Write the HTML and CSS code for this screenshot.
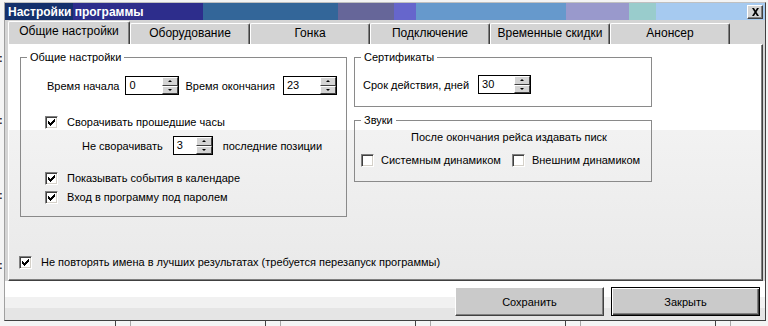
FILE: index.html
```html
<!DOCTYPE html>
<html lang="ru">
<head>
    <meta charset="UTF-8">
    <meta name="viewport" content="width=device-width, initial-scale=1.0">
    <title>Настройки программы</title>
    <link rel="stylesheet" href="styles.css">
</head>
<body>
    <div class="desk">
        <div class="left-strip">
            <span class="dots d1">:</span>
            <span class="dots d2">:</span>
            <span class="dots d3">:</span>
            <span class="dots d4">:</span>
        </div>
        <div class="window">
            <div class="titlebar">
                <span class="title">Настройки программы</span>
                <button class="close-btn">
                    <svg width="9" height="8" viewBox="0 0 9 8"><path d="M1 0h2l1.5 2.5L6 0h2L5.5 4L8 8H6L4.5 5.5L3 8H1l2.5-4z"/></svg>
                </button>
            </div>

            <div class="tabs">
                <div class="tab active">Общие настройки</div>
                <div class="tab">Оборудование</div>
                <div class="tab">Гонка</div>
                <div class="tab">Подключение</div>
                <div class="tab">Временные скидки</div>
                <div class="tab">Анонсер</div>
            </div>

            <div class="page">
                <div class="groups">
                    <fieldset class="group general">
                        <legend>Общие настройки</legend>
                        <div class="row times">
                            <span>Время начала</span>
                            <div class="spin s-start"><span class="val">0</span><span class="spin-btns"><i class="up"></i><i class="down"></i></span></div>
                            <span>Время окончания</span>
                            <div class="spin s-end"><span class="val">23</span><span class="spin-btns"><i class="up"></i><i class="down"></i></span></div>
                        </div>
                        <label class="check collapse">
                            <span class="box"><svg width="7" height="7" viewBox="0 0 7 7"><path d="M6 0h1v1H6zM5 1h2v1H5zM0 2h1v1H0zM4 2h3v1H4zM0 3h2v1H0zM3 3h3v1H3zM0 4h5v1H0zM1 5h3v1H1zM2 6h1v1H2z"/></svg></span>
                            Сворачивать прошедшие часы
                        </label>
                        <div class="row keep">
                            <span>Не сворачивать</span>
                            <div class="spin s-keep"><span class="val">3</span><span class="spin-btns"><i class="up"></i><i class="down"></i></span></div>
                            <span>последние позиции</span>
                        </div>
                        <label class="check events">
                            <span class="box"><svg width="7" height="7" viewBox="0 0 7 7"><path d="M6 0h1v1H6zM5 1h2v1H5zM0 2h1v1H0zM4 2h3v1H4zM0 3h2v1H0zM3 3h3v1H3zM0 4h5v1H0zM1 5h3v1H1zM2 6h1v1H2z"/></svg></span>
                            Показывать события в календаре
                        </label>
                        <label class="check password">
                            <span class="box"><svg width="7" height="7" viewBox="0 0 7 7"><path d="M6 0h1v1H6zM5 1h2v1H5zM0 2h1v1H0zM4 2h3v1H4zM0 3h2v1H0zM3 3h3v1H3zM0 4h5v1H0zM1 5h3v1H1zM2 6h1v1H2z"/></svg></span>
                            Вход в программу под паролем
                        </label>
                    </fieldset>

                    <div class="side">
                        <fieldset class="group certs">
                            <legend>Сертификаты</legend>
                            <div class="row term">
                                <span>Срок действия, дней</span>
                                <div class="spin s-term"><span class="val">30</span><span class="spin-btns"><i class="up"></i><i class="down"></i></span></div>
                            </div>
                        </fieldset>
                        <fieldset class="group sounds">
                            <legend>Звуки</legend>
                            <div class="beep-note">После окончания рейса издавать писк</div>
                            <div class="row speakers">
                                <label class="check"><span class="box"></span>Системным динамиком</label>
                                <label class="check"><span class="box"></span>Внешним динамиком</label>
                            </div>
                        </fieldset>
                    </div>
                </div>

                <label class="check unique">
                    <span class="box"><svg width="7" height="7" viewBox="0 0 7 7"><path d="M6 0h1v1H6zM5 1h2v1H5zM0 2h1v1H0zM4 2h3v1H4zM0 3h2v1H0zM3 3h3v1H3zM0 4h5v1H0zM1 5h3v1H1zM2 6h1v1H2z"/></svg></span>
                    Не повторять имена в лучших результатах (требуется перезапуск программы)
                </label>
            </div>

            <div class="footer">
                <button class="btn">Сохранить</button>
                <button class="btn default">Закрыть</button>
            </div>
        </div>
    </div>
</body>
</html>
```

FILE: styles.css
```css
* { box-sizing: border-box; margin: 0; padding: 0; }
body { background: #f4f4f4; font-family: "Liberation Sans", Arial, sans-serif; font-size: 11px; color: #000; overflow: hidden; }

/* what is behind the dialog */
.desk { display: flex; height: 326px; background: repeating-linear-gradient(90deg, transparent 0 115px, #444 115px 116px, transparent 116px 130px, #a8a8a8 130px 131px, transparent 131px 150px) left bottom / 100% 5px no-repeat; }
.left-strip { width: 4px; display: flex; flex-direction: column; font-weight: bold; line-height: 10px; color: #222; }
.dots { margin-left: -1px; }
.d1 { margin-top: 53px; }
.d2 { margin-top: 52px; }
.d3 { margin-top: 65px; }
.d4 { margin-top: 60px; }

/* window frame */
.window { width: 762px; height: 319px; margin-top: 2px; border: 1px solid; border-color: #c0c0c0 #404040 #404040 #a0a0a0; background: #d4d4d4; display: flex; flex-direction: column; }
.titlebar { height: 17px; display: flex; align-items: center; justify-content: space-between; background: linear-gradient(90deg, #14306c 0 68px, #2d2d8c 68px 198px, #336699 198px 333px, #666699 333px 389px, #6666cc 389px 411px, #6699cc 411px 561px, #9999cc 561px 624px, #99cccc 624px 651px, #a6caf0 651px); }
.title { color: #fff; font-weight: bold; font-size: 12px; padding-left: 3px; }
.close-btn { width: 16px; height: 14px; margin-right: 2px; background: #d4d4d4; border: 1px solid; border-color: #fff #404040 #404040 #fff; box-shadow: inset -1px -1px #808080; display: flex; align-items: center; justify-content: center; }

/* tabs */
.tabs { height: 24px; display: flex; align-items: flex-end; padding-left: 3px; }
.tab { width: 120px; height: 21px; border: 1px solid; border-bottom: none; border-color: #fff #404040 transparent #fff; border-radius: 2px 2px 0 0; box-shadow: inset -1px 0 #808080; text-align: center; line-height: 19px; font-size: 12px; }
.tab.active { width: 122px; height: 23px; }

/* tab page */
.page { height: 237px; margin: 0 2px 0 3px; border: 1px solid; border-color: #fff #404040 #404040 #fff; box-shadow: inset -1px -1px #808080; background: linear-gradient(#fff 0 85px, #f2f2f2 85px, #e9e9e9); padding: 5px 0 0 10px; }
.groups { display: flex; align-items: flex-start; gap: 7px; margin-left: 1px; }
.group { border: 1px solid #8a8a8a; }
.group legend { margin-left: 6px; padding: 0 3px; line-height: 14px; }
.row { display: flex; align-items: center; }

.general { width: 327px; padding-bottom: 12px; }
.times { margin: 12px 0 0 26px; gap: 6px; }
.times .s-end { margin-left: 2px; }
.collapse { margin: 21px 0 0 24px; }
.keep { margin: 7px 0 0 61px; gap: 10px; }
.events { margin: 17px 0 0 24px; }
.password { margin: 6px 0 0 24px; }

.side { display: flex; flex-direction: column; gap: 6px; }
.certs, .sounds { width: 298px; }
.certs { padding-bottom: 12px; }
.term { margin: 11px 0 0 8px; gap: 9px; }
.sounds { padding-bottom: 14px; }
.beep-note { margin-top: 3px; padding-left: 12px; text-align: center; line-height: 14px; }
.speakers { margin: 10px 0 0 6px; gap: 11px; }
.speakers .check { gap: 7px; }

.unique { margin: 39px 0 0 0; gap: 8px; }

/* spin edit */
.spin { display: flex; height: 19px; border: 1px solid #000; background: #fff; }
.s-start, .s-end { width: 54px; }
.s-keep { width: 40px; }
.s-term { width: 53px; }
.spin .val { flex: 1; padding-left: 3px; line-height: 17px; }
.spin-btns { width: 16px; display: flex; flex-direction: column; }
.spin-btns i { flex: 1; background: #d4d4d4; border: 1px solid; border-color: #fff #404040 #404040 #fff; display: flex; align-items: center; justify-content: center; }
.spin-btns i::before { content: ""; border-left: 2px solid transparent; border-right: 2px solid transparent; border-bottom: 2px solid #000; }
.spin-btns i.down::before { border-bottom: none; border-top: 2px solid #000; }

/* checkbox */
.check { display: flex; align-items: center; gap: 9px; height: 13px; line-height: 13px; }
.box { width: 13px; height: 13px; flex: none; border: 1px solid; border-color: #808080 #fff #fff #808080; box-shadow: inset 1px 1px #404040, inset -1px -1px #d4d0c8; background: #fff; display: flex; align-items: center; justify-content: center; }
.box svg { display: block; }

/* bottom buttons */
.footer { height: 39px; display: flex; justify-content: flex-end; align-items: flex-start; gap: 7px; padding: 6px 5px 0 0; background: linear-gradient(#fff 0 16px, #f1f1f1 16px 27px, #e5e5e5 27px); }
.btn { width: 149px; height: 29px; font: inherit; background: #cacaca; border: 1px solid; border-color: #fff #404040 #404040 #fff; box-shadow: inset -1px -1px #808080; }
.btn.default { border-color: #000; box-shadow: inset 1px 1px #fff, inset -1px -1px #404040, inset -2px -2px #808080; }
```
